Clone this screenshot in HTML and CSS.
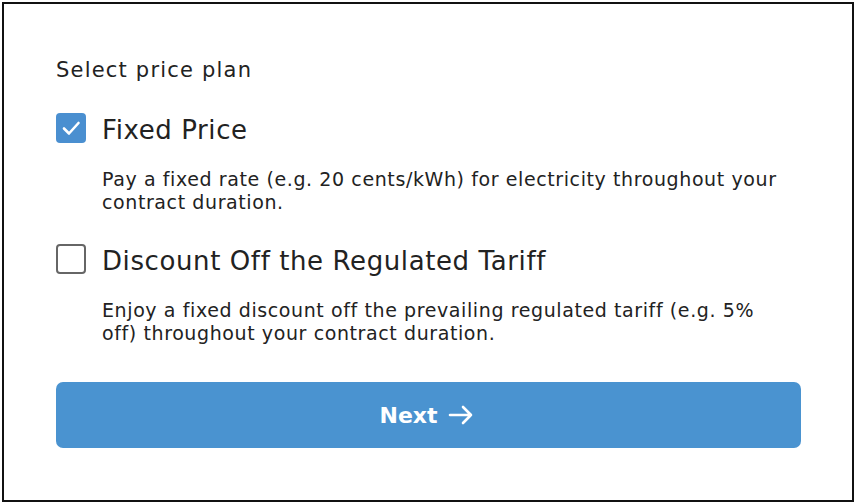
FILE: index.html
```html
<!DOCTYPE html>
<html lang="en">
<head>
    <meta charset="UTF-8">
    <meta name="viewport" content="width=device-width, initial-scale=1.0">
    <title>Select price plan</title>
    <link rel="stylesheet" href="styles.css">
</head>
<body>
    <div class="frame">
        <form class="plan-form">
            <p class="title">Select price plan</p>

            <!-- Fixed price option -->
            <label class="option">
                <span class="box checked">
                    <svg width="30" height="30" viewBox="0 0 30 30"><polyline points="8,15.5 13,20.5 22.5,10" fill="none" stroke="#fff" stroke-width="2.6" stroke-linecap="round" stroke-linejoin="round"/></svg>
                </span>
                <span class="option-name">Fixed Price</span>
            </label>
            <p class="desc">Pay a fixed rate (e.g. 20 cents/kWh) for electricity throughout your contract duration.</p>

            <!-- Discount option -->
            <label class="option">
                <span class="box"></span>
                <span class="option-name">Discount Off the Regulated Tariff</span>
            </label>
            <p class="desc">Enjoy a fixed discount off the prevailing regulated tariff (e.g. 5% off) throughout your contract duration.</p>

            <button type="button" class="next-btn">
                Next
                <svg width="26" height="20" viewBox="0 0 26 20"><path d="M2 10h21M15 2l8 8-8 8" fill="none" stroke="#fff" stroke-width="2.6" stroke-linecap="round" stroke-linejoin="round"/></svg>
            </button>
        </form>
    </div>
</body>
</html>
```

FILE: styles.css
```css
/* Global styling */
* { box-sizing: border-box; margin: 0; padding: 0; }
body { background: #fff; color: #222; font-family: "DejaVu Sans", Arial, sans-serif; }

/* Outer frame */
.frame {
    margin: 2px; width: 852px; height: 500px;
    border: 2px solid #111; background: #fff;
    padding: 53px 51px 0 52px;
}

.plan-form { display: flex; flex-direction: column; }
.title { font-size: 21px; line-height: 26px; letter-spacing: 1.2px; color: #222; }

/* Options */
.option { display: flex; align-items: center; gap: 16px; height: 30px; margin-top: 30px; cursor: pointer; }
.box { width: 30px; height: 30px; flex: none; border: 2px solid #666; border-radius: 4px; background: #fff; }
.box.checked { border: none; background: #4a8fd0; }
.box svg { display: block; }
.option-name { font-size: 26px; line-height: 30px; letter-spacing: 0.6px; color: #222; padding-top: 3px; }
.desc { margin-top: 25px; padding-left: 46px; padding-right: 20px; font-size: 19px; line-height: 23px; letter-spacing: 0.6px; color: #222; }

/* Next button */
.next-btn {
    margin-top: 37px; height: 66px; width: 100%;
    display: flex; align-items: center; justify-content: center; gap: 10px;
    background: #4a93d0; border: none; border-radius: 7px;
    color: #fff; font-family: inherit; font-size: 22px; font-weight: bold; cursor: pointer;
    padding-right: 4px;
}
.next-btn svg { display: block; }
```
